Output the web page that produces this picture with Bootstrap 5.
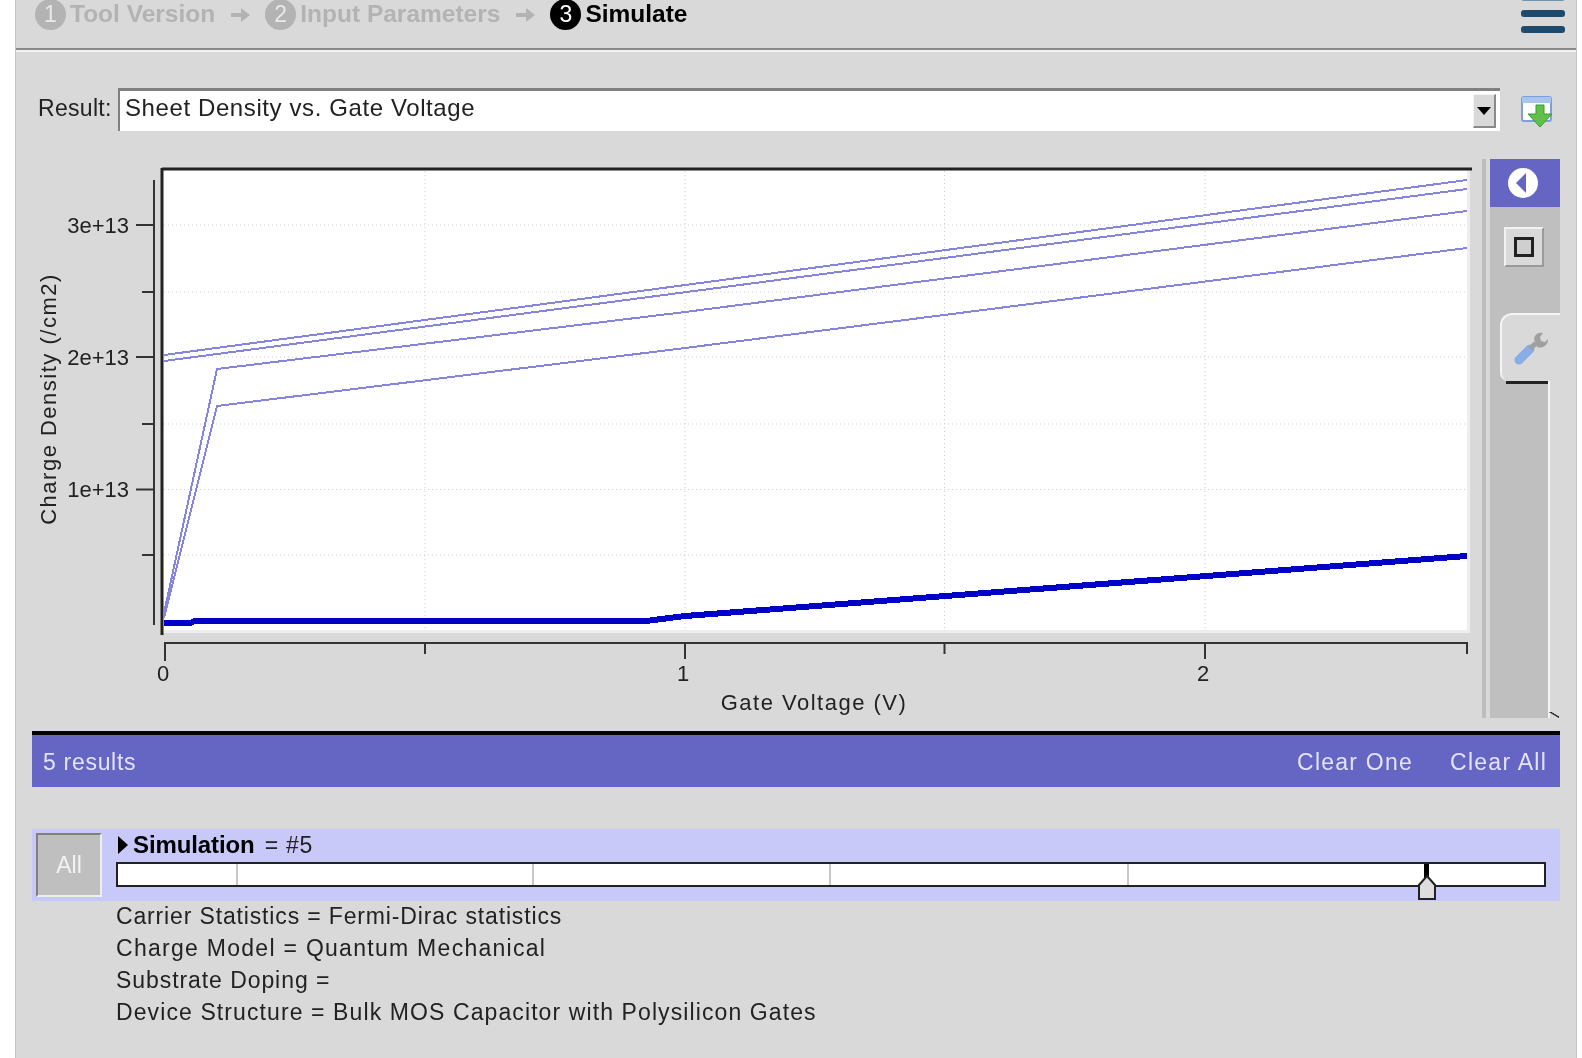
<!DOCTYPE html>
<html>
<head>
    <title>Simulate</title>
    <link href="https://cdn.jsdelivr.net/npm/bootstrap@5.3.0/dist/css/bootstrap.min.css" rel="stylesheet">
    <style>
        html, body { height: 100%; margin: 0; background: #fff; overflow: hidden; }
        body { font-family: "Liberation Sans", Arial, sans-serif; font-size: 23px; color: #222; }
        .app-shell { margin-left: 15px; width: 1562px; height: 1058px; background: #d9d9d9; border-left: 1px solid #c4c4c4; border-right: 1px solid #c4c4c4; overflow: hidden; filter: blur(.5px); }
        .step-bar { height: 50px; padding-left: 19px; padding-right: 11px; border-bottom: 2px solid #8a8a8a; box-shadow: 0 2px 0 #f1f1f1; }
        .steps { margin-top: -19px; font-size: 24.5px; font-weight: 700; color: #b3b3b3; }
        .step-num { width: 31px; height: 31px; border-radius: 50%; background: #b3b3b3; color: #e8e8e8; font-weight: 400; font-size: 23px; margin-right: 4px; }
        .step-on { color: #000; }
        .step-on .step-num { background: #000; color: #fff; }
        .step-arrow { margin: 0 14px 0 16px; }
        .burger { align-self: flex-start; margin-top: -6px; width: 44px; }
        .burger i { display: block; height: 7px; border-radius: 3px; background: #1d4a6d; margin-bottom: 9px; }
        .burger i:first-child { background: #6f93ad; }
        .result-row { margin-top: 38px; padding-left: 22px; height: 43px; }
        .result-label { width: 80px; padding-bottom: 2px; letter-spacing: .3px; }
        .result-box { width: 1382px; height: 43px; background: #fff; border-top: 3px solid #808080; border-left: 2px solid #808080; padding: 0 4px 0 5px; font-size: 24px; }
        .result-text { padding-bottom: 6px; letter-spacing: .6px; }
        .select-btn { width: 23px; height: 34px; background: #d9d9d9; border-right: 2px solid #8a8a8a; border-bottom: 2px solid #8a8a8a; border-left: 1px solid #f5f5f5; border-top: 1px solid #f5f5f5; }
        .select-btn span { width: 0; height: 0; border-left: 7px solid transparent; border-right: 7px solid transparent; border-top: 8px solid #000; }
        .dl-icon { margin: 5px 0 0 21px; }
        .plot-row { margin-top: 28px; margin-left: 16px; height: 559px; }
        .plot-svg { display: block; width: 1450px; height: 559px; flex: none; }
        .plot-svg text { font-family: "Liberation Sans", Arial, sans-serif; font-size: 22px; fill: #222; }
        .plot-svg .axis-title { letter-spacing: 1.5px; }
        .curve-set { shape-rendering: crispEdges; }
        .side-strip { width: 4px; background: #bdbdbd; margin-right: 4px; flex: none; }
        .side-panel { width: 70px; flex: none; }
        .side-head { height: 48px; background: #6565c3; padding-right: 4px; }
        .side-top { height: 106px; background: #bfbfbf; padding: 20px 16px 0 14px; }
        .stop-btn { width: 40px; height: 40px; background: #d9d9d9; border: 2px solid; border-color: #f2f2f2 #9a9a9a #9a9a9a #f2f2f2; }
        .stop-btn span { width: 20px; height: 20px; border: 3px solid #222; display: block; background: #cfcfcf; }
        .side-tab-wrap { background: #bfbfbf; height: 68px; padding-left: 10px; }
        .side-tab { height: 68px; background: #d9d9d9; border-top: 2px solid #f4f4f4; border-left: 2px solid #f4f4f4; border-top-left-radius: 12px; border-bottom-left-radius: 8px; }
        .side-rest { position: relative; width: 60px; flex-grow: 1; border-right: 2px solid #f4f4f4; background: linear-gradient(#222, #222) no-repeat 16px 0 / 44px 3px, #bfbfbf; }
        .side-rest::after { content: ""; position: absolute; right: -11px; bottom: 0; width: 10px; height: 6px; background: linear-gradient(to top right, transparent 45%, #555 50%, #222 60%, transparent 65%); }
        .results-bar { margin: 13px 0 0 16px; width: 1528px; height: 56px; background: #6565c3; border-top: 4px solid #000; color: #e3e3fb; padding: 3px 13px 0 11px; letter-spacing: .7px; }
        .clear-links { letter-spacing: 1.25px; }
        .clear-links span + span { margin-left: 37px; }
        .sim-row { margin: 42px 0 0 16px; width: 1528px; height: 72px; background: #c9c9f9; padding: 4px 14px 4px 4px; }
        .all-btn { width: 66px; height: 64px; flex: none; background: #bfbfbf; color: #f2f2f2; border: 2px solid; border-color: #808080 #eee #eee #808080; }
        .sim-main { margin-left: 14px; flex-grow: 1; }
        .sim-title { height: 26px; line-height: 26px; margin-top: -1px; letter-spacing: .7px; }
        .sim-title b { color: #000; font-size: 24px; letter-spacing: -.1px; margin-right: 10px; }
        .tri { width: 0; height: 0; border-left: 10px solid #000; border-top: 9px solid transparent; border-bottom: 9px solid transparent; margin: 0 5px 0 2px; }
        .slider-track { position: relative; height: 25px; margin-top: 4px; background: #fff; border: 2px solid #222; }
        .slider-tick { position: absolute; top: 0; bottom: 0; width: 2px; background: #c8c8c8; }
        .slider-thumb { position: absolute; left: 1300px; top: 0; width: 18px; height: 36px; }
        .param-list { margin: -1px 0 0 100px; padding: 0; list-style: none; line-height: 32px; letter-spacing: 1.1px; }
        .param-carrier { letter-spacing: .85px; }
        .param-charge { letter-spacing: 1.28px; }
        .param-doping { letter-spacing: .93px; }
    </style>
</head>
<body>
    <div class="app-shell">
        <div class="step-bar d-flex align-items-center justify-content-between">
            <div class="steps d-flex align-items-center">
                <span class="step-num d-flex align-items-center justify-content-center">1</span>Tool Version
                <svg class="step-arrow" width="20" height="18" viewBox="0 0 20 18"><path d="M0 7h10V2l9 7-9 7v-5H0z" fill="#b3b3b3"/></svg>
                <span class="step-num d-flex align-items-center justify-content-center">2</span>Input Parameters
                <svg class="step-arrow" width="20" height="18" viewBox="0 0 20 18"><path d="M0 7h10V2l9 7-9 7v-5H0z" fill="#b3b3b3"/></svg>
                <span class="step-on d-flex align-items-center"><span class="step-num d-flex align-items-center justify-content-center">3</span>Simulate</span>
            </div>
            <div class="burger"><i></i><i></i><i></i></div>
        </div>

        <div class="result-row d-flex align-items-center">
            <div class="result-label">Result:</div>
            <div class="result-box d-flex align-items-center justify-content-between">
                <span class="result-text">Sheet Density vs. Gate Voltage</span>
                <div class="select-btn d-flex align-items-center justify-content-center"><span></span></div>
            </div>
            <svg class="dl-icon" width="33" height="33" viewBox="0 0 33 33">
                <rect x="1" y="1" width="29" height="24" rx="2" fill="#fff" stroke="#7f9fdc" stroke-width="2"/>
                <rect x="1" y="1" width="29" height="6" fill="#a9c4ee"/>
                <path d="M15 9h8v9h8L19 31 7 18h8z" fill="#5fc04a" stroke="#3d9a33"/>
            </svg>
        </div>

        <div class="plot-row d-flex">
            <svg class="plot-svg" viewBox="32 159 1450 559">
                <rect x="163" y="170" width="1304" height="460" fill="#fff"/>
                <path d="M1468.5 170V631.5H163" fill="none" stroke="#eee" stroke-width="3"/>
                <g stroke="#cfcfcf" stroke-dasharray="1 3">
                    <path d="M425 171V630M685 171V630M944.500 171V630M1205 171V630"/>
                    <path d="M164 225H1467M164 292H1467M164 357H1467M164 424H1467M164 489.500H1467M164 555H1467"/>
                </g>
                <path d="M162 169H1472M162 168V635" fill="none" stroke="#222" stroke-width="3"/>
                <g class="curve-set" fill="none" stroke="#8585e0" stroke-width="2">
                    <polyline points="164,355 1467,180"/>
                    <polyline points="164,361 1467,189"/>
                    <polyline points="164,613 217,369 685,312 1467,211"/>
                    <polyline points="164,618 217,406 685,348 944,315 1467,248"/>
                </g>
                <polyline class="curve-set" points="164,623 190,623 195,621 646,621 685,616 1467,556" fill="none" stroke="#0000c8" stroke-width="6"/>
                <g fill="none" stroke="#333" stroke-width="2">
                    <path d="M154 180V625"/>
                    <path d="M136 225H154M142 292H154M136 357H154M142 424H154M136 489.500H154M142 555H154"/>
                    <path d="M165 661V643H1467V654M425 643V654M685 643V659M944.500 643V654M1205 643V659"/>
                </g>
                <text x="129" y="233" text-anchor="end">3e+13</text>
                <text x="129" y="365" text-anchor="end">2e+13</text>
                <text x="129" y="497" text-anchor="end">1e+13</text>
                <text x="163" y="681" text-anchor="middle">0</text>
                <text x="683" y="681" text-anchor="middle">1</text>
                <text x="1203" y="681" text-anchor="middle">2</text>
                <text class="axis-title" x="814" y="710" text-anchor="middle">Gate Voltage (V)</text>
                <text class="axis-title" transform="translate(56 399) rotate(-90)" text-anchor="middle">Charge Density (/cm2)</text>
            </svg>
            <div class="side-strip"></div>
            <div class="side-panel d-flex flex-column">
                <div class="side-head d-flex align-items-center justify-content-center">
                    <svg width="30" height="30" viewBox="0 0 30 30"><circle cx="15" cy="15" r="15" fill="#fff"/><path d="M18 5v20L8 15z" fill="#6565c3"/></svg>
                </div>
                <div class="side-top"><div class="stop-btn d-flex align-items-center justify-content-center"><span></span></div></div>
                <div class="side-tab-wrap">
                    <div class="side-tab d-flex align-items-center justify-content-center">
                        <svg width="36" height="36" viewBox="0 0 36 36">
                            <path d="M6 30L17 19" stroke="#8aade8" stroke-width="9" stroke-linecap="round"/>
                            <path d="M17 19l6-6" stroke="#a0a0a0" stroke-width="5"/>
                            <path d="M21 9a7 7 0 0 1 9-6l-3 4 1 4 4 1 3-3a8 8 0 0 1-11 8z" fill="#a0a0a0"/>
                        </svg>
                    </div>
                </div>
                <div class="side-rest"></div>
            </div>
        </div>

        <div class="results-bar d-flex align-items-center justify-content-between">
            <span>5 results</span>
            <div class="clear-links"><span>Clear One</span><span>Clear All</span></div>
        </div>

        <div class="sim-row d-flex">
            <div class="all-btn d-flex align-items-center justify-content-center">All</div>
            <div class="sim-main">
                <div class="sim-title d-flex align-items-center"><span class="tri"></span><b>Simulation</b>= #5</div>
                <div class="slider-track">
                    <span class="slider-tick" style="left: 118px"></span>
                    <span class="slider-tick" style="left: 414px"></span>
                    <span class="slider-tick" style="left: 711px"></span>
                    <span class="slider-tick" style="left: 1009px"></span>
                    <svg class="slider-thumb" viewBox="0 0 18 36"><rect x="6" y="0" width="5" height="16" fill="#000"/><path d="M1 35V21L9 12l8 9V35z" fill="#ddd" stroke="#222" stroke-width="2"/></svg>
                </div>
            </div>
        </div>

        <ul class="param-list">
            <li class="param-carrier">Carrier Statistics = Fermi-Dirac statistics</li>
            <li class="param-charge">Charge Model = Quantum Mechanical</li>
            <li class="param-doping">Substrate Doping =</li>
            <li>Device Structure = Bulk MOS Capacitor with Polysilicon Gates</li>
        </ul>
    </div>
</body>
</html>
